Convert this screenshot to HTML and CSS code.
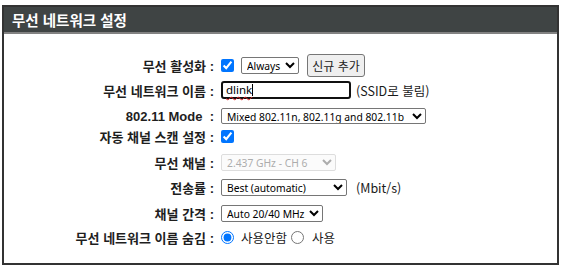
FILE: index.html
```html
<!DOCTYPE html>
<html lang="ko">
<head>
<meta charset="utf-8">
<title>무선 네트워크 설정</title>
<link rel="stylesheet" href="styles.css">
</head>
<body>
<div class="panel">
  <div class="panel-head">무선 네트워크 설정</div>
  <div class="form">
    <div class="lbl">무선 활성화 :</div>
    <div class="ctl">
      <input type="checkbox" class="chk" checked>
      <select class="sel w-always"><option>Always</option></select>
      <button type="button" class="btn">신규 추가</button>
    </div>

    <div class="lbl">무선 네트워크 이름 :</div>
    <div class="ctl">
      <div class="txt" role="textbox"><span class="typo">dlink</span><span class="caret"></span></div>
      <span class="note">(SSID로 불림)</span>
    </div>

    <div class="lbl">802.11 Mode&nbsp; :</div>
    <div class="ctl">
      <select class="sel w-mode"><option>Mixed 802.11n, 802.11g and 802.11b</option></select>
    </div>

    <div class="lbl">자동 채널 스캔 설정 :</div>
    <div class="ctl">
      <input type="checkbox" class="chk" checked>
    </div>

    <div class="lbl">무선 채널 :</div>
    <div class="ctl">
      <select class="sel w-chan" disabled><option>2.437 GHz - CH 6</option></select>
    </div>

    <div class="lbl">전송률 :</div>
    <div class="ctl">
      <select class="sel w-rate"><option>Best (automatic)</option></select>
      <span class="note note-rate">(Mbit/s)</span>
    </div>

    <div class="lbl">채널 간격 :</div>
    <div class="ctl">
      <select class="sel w-width"><option>Auto 20/40 MHz</option></select>
    </div>

    <div class="lbl">무선 네트워크 이름 숨김 :</div>
    <div class="ctl">
      <input type="radio" name="hide" class="rad" checked>
      <span class="note">사용안함</span>
      <input type="radio" name="hide" class="rad rad-2">
      <span class="note note-use">사용</span>
    </div>
  </div>
</div>
</body>
</html>
```

FILE: styles.css
```css
html, body {
  margin: 0;
  padding: 0;
  background: #ffffff;
}

body {
  width: 562px;
  height: 267px;
  overflow: hidden;
  font-family: "Noto Sans CJK KR", "Noto Sans", sans-serif;
  color: #111;
}

.panel {
  box-sizing: border-box;
  margin: 5px 0 0 2px;
  width: 557px;
  height: 260px;
  border: 2px solid #333333;
  background: #fff;
}

.panel-head {
  height: 25px;
  background: #3f4444;
  border-bottom: 2px solid #828282;
  color: #ffffff;
  font-weight: bold;
  font-size: 14.5px;
  line-height: 25px;
  padding-left: 8px;
}

.form {
  display: grid;
  grid-template-columns: 210px 1fr;
  grid-template-rows: 25px 26px 20px 26px 25px 26px 24px 20px;
  column-gap: 7px;
  padding-top: 21px;
}

.lbl,
.ctl {
  align-self: start;
  height: 20px;
  display: flex;
  align-items: center;
}

.lbl {
  justify-content: flex-end;
  font-family: "Liberation Sans", "Noto Sans CJK KR", sans-serif;
  font-weight: bold;
  font-size: 13px;
  color: #1e1e1e;
  white-space: nowrap;
}

.ctl {
  gap: 7px;
  white-space: nowrap;
}

.chk,
.rad {
  width: 13px;
  height: 13px;
  margin: 0;
  accent-color: #0075ff;
  flex: none;
}

.sel {
  box-sizing: border-box;
  height: 17px;
  margin: 0;
  padding: 0 0 0 1px;
  font-family: "Noto Sans", sans-serif;
  font-size: 10.3px;
  color: #000;
  background: #fff;
  border: 1px solid #767676;
  border-radius: 2px;
}

.sel:disabled {
  color: #8a8a8a;
  border-color: #d0d0d0;
  background: #fafafa;
}

.w-always { width: 58px; }
.w-mode { width: 205px; height: 16px; }
.w-chan { width: 115px; }
.w-rate { width: 126px; }
.w-width { width: 102px; }

.btn {
  box-sizing: border-box;
  width: 58px;
  height: 23px;
  margin: 0 0 0 1px;
  padding: 0;
  font-family: "Noto Sans CJK KR", sans-serif;
  font-size: 12px;
  color: #222;
  background: #efefef;
  border: 1px solid #767676;
  border-radius: 3px;
}

.txt {
  box-sizing: border-box;
  width: 130px;
  height: 18px;
  border: 2px solid #101010;
  border-radius: 3px;
  display: flex;
  align-items: center;
  padding-left: 3px;
  font-family: "Noto Sans", sans-serif;
  font-size: 11.5px;
  color: #000;
}

.typo {
  text-decoration: underline wavy #e02020;
  text-decoration-thickness: 1px;
  text-underline-offset: 2px;
  line-height: 14px;
}

.caret {
  width: 1px;
  height: 12px;
  background: #000;
}

.note {
  font-family: "Noto Sans CJK KR", sans-serif;
  font-size: 12.5px;
  color: #1a1a1a;
}

.txt + .note { margin-left: -2px; }
.note-rate { margin-left: 2px; }
.rad-2 { margin-left: -3px; }
.note-use { margin-left: 1px; }
```
